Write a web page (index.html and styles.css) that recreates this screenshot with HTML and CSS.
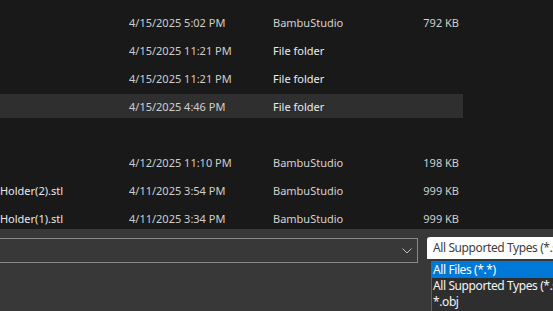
FILE: index.html
```html
<!DOCTYPE html>
<html lang="en">
<head>
    <meta charset="UTF-8" />
    <title>Open file</title>
    <link rel="stylesheet" href="styles.css">
</head>
<body>
<div class="files">
    <div class="row">
        <div class="name"></div>
        <div class="date">4/15/2025 5:10 PM</div>
        <div class="type">File folder</div>
        <div class="size"></div>
    </div>
    <div class="row">
        <div class="name"></div>
        <div class="date">4/15/2025 5:02 PM</div>
        <div class="type">BambuStudio</div>
        <div class="size">792 KB</div>
    </div>
    <div class="row">
        <div class="name"></div>
        <div class="date">4/15/2025 11:21 PM</div>
        <div class="type folder">File folder</div>
        <div class="size"></div>
    </div>
    <div class="row">
        <div class="name"></div>
        <div class="date">4/15/2025 11:21 PM</div>
        <div class="type folder">File folder</div>
        <div class="size"></div>
    </div>
    <div class="row selected">
        <div class="name"></div>
        <div class="date">4/15/2025 4:46 PM</div>
        <div class="type folder">File folder</div>
        <div class="size"></div>
    </div>
    <div class="row"></div>
    <div class="row">
        <div class="name"></div>
        <div class="date">4/12/2025 11:10 PM</div>
        <div class="type">BambuStudio</div>
        <div class="size">198 KB</div>
    </div>
    <div class="row">
        <div class="name"><span>Holder(2).stl</span></div>
        <div class="date">4/11/2025 3:54 PM</div>
        <div class="type">BambuStudio</div>
        <div class="size">999 KB</div>
    </div>
    <div class="row">
        <div class="name"><span>Holder(1).stl</span></div>
        <div class="date">4/11/2025 3:34 PM</div>
        <div class="type">BambuStudio</div>
        <div class="size">999 KB</div>
    </div>
</div>

<div class="bottom">
    <div class="filename">
        <svg class="chevron" width="10" height="6" viewBox="0 0 10 6">
            <path d="M0.5 0.5 L5 5 L9.5 0.5" fill="none" stroke="#bdbdbd" stroke-width="1"/>
        </svg>
    </div>
    <div class="filter">
        <div class="filter-box">All Supported Types (*.stl;*.3mf)</div>
        <ul class="filter-list">
            <li class="active">All Files (*.*)</li>
            <li>All Supported Types (*.stl;*.3mf)</li>
            <li>*.obj</li>
            <li>*.stl</li>
        </ul>
    </div>
</div>
</body>
</html>
```

FILE: styles.css
```css
body {
    margin: 0;
    width: 553px;
    height: 311px;
    overflow: hidden;
    background: #191919;
    font-family: "Noto Sans", "Open Sans", sans-serif;
    font-size: 11px;
    color: #d6d6d6;
}

.files {
    display: flex;
    flex-direction: column;
    gap: 4px;
    margin-top: -18px;
    height: 247px;
    overflow: hidden;
}
.row {
    display: flex;
    align-items: center;
    width: 463px;
    height: 24px;
    flex-shrink: 0;
}
.row.selected { background: #2f2f2f; }

.name {
    width: 129px;
    flex-shrink: 0;
    box-sizing: border-box;
    padding-right: 66px;
    display: flex;
    justify-content: flex-end;
    white-space: nowrap;
    overflow: hidden;
    color: #e8e8e8;
}
.name span { flex-shrink: 0; }
.date { width: 144px; flex-shrink: 0; color: #cfcfcf; }
.type { width: 120px; flex-shrink: 0; color: #d4d4d4; }
.type.folder { color: #ececec; }
.size {
    width: 66px;
    flex-shrink: 0;
    text-align: right;
    color: #d0d0d0;
}

.bottom {
    height: 82px;
    background: #383838;
    display: flex;
    align-items: flex-start;
    padding-top: 8px;
    box-sizing: border-box;
    gap: 9px;
    font-size: 12px;
    letter-spacing: -0.4px;
}
.filename {
    width: 418px;
    height: 25px;
    flex-shrink: 0;
    margin-top: 1px;
    box-sizing: border-box;
    border: 1px solid #8a8a8a;
    border-left: none;
    display: flex;
    align-items: center;
    justify-content: flex-end;
    padding-right: 5px;
}

.filter {
    position: relative;
    width: 126px;
    flex-shrink: 0;
}
.filter-box {
    height: 22px;
    line-height: 22px;
    background: #fff;
    color: #404040;
    padding-left: 6px;
    white-space: nowrap;
    overflow: hidden;
    border-radius: 3px 0 0 0;
}
.filter-list {
    position: absolute;
    top: 24px;
    left: 4px;
    right: 0;
    margin: 0;
    padding: 0;
    list-style: none;
    background: #2e2e2e;
    border-left: 1px solid #0078d7;
    border-top: 1px solid #0078d7;
}
.filter-list li {
    height: 16px;
    line-height: 16px;
    padding-left: 1px;
    color: #f4f4f4;
    white-space: nowrap;
    overflow: hidden;
}
.filter-list li.active {
    background: #0078d7;
    color: #fff;
}
```
